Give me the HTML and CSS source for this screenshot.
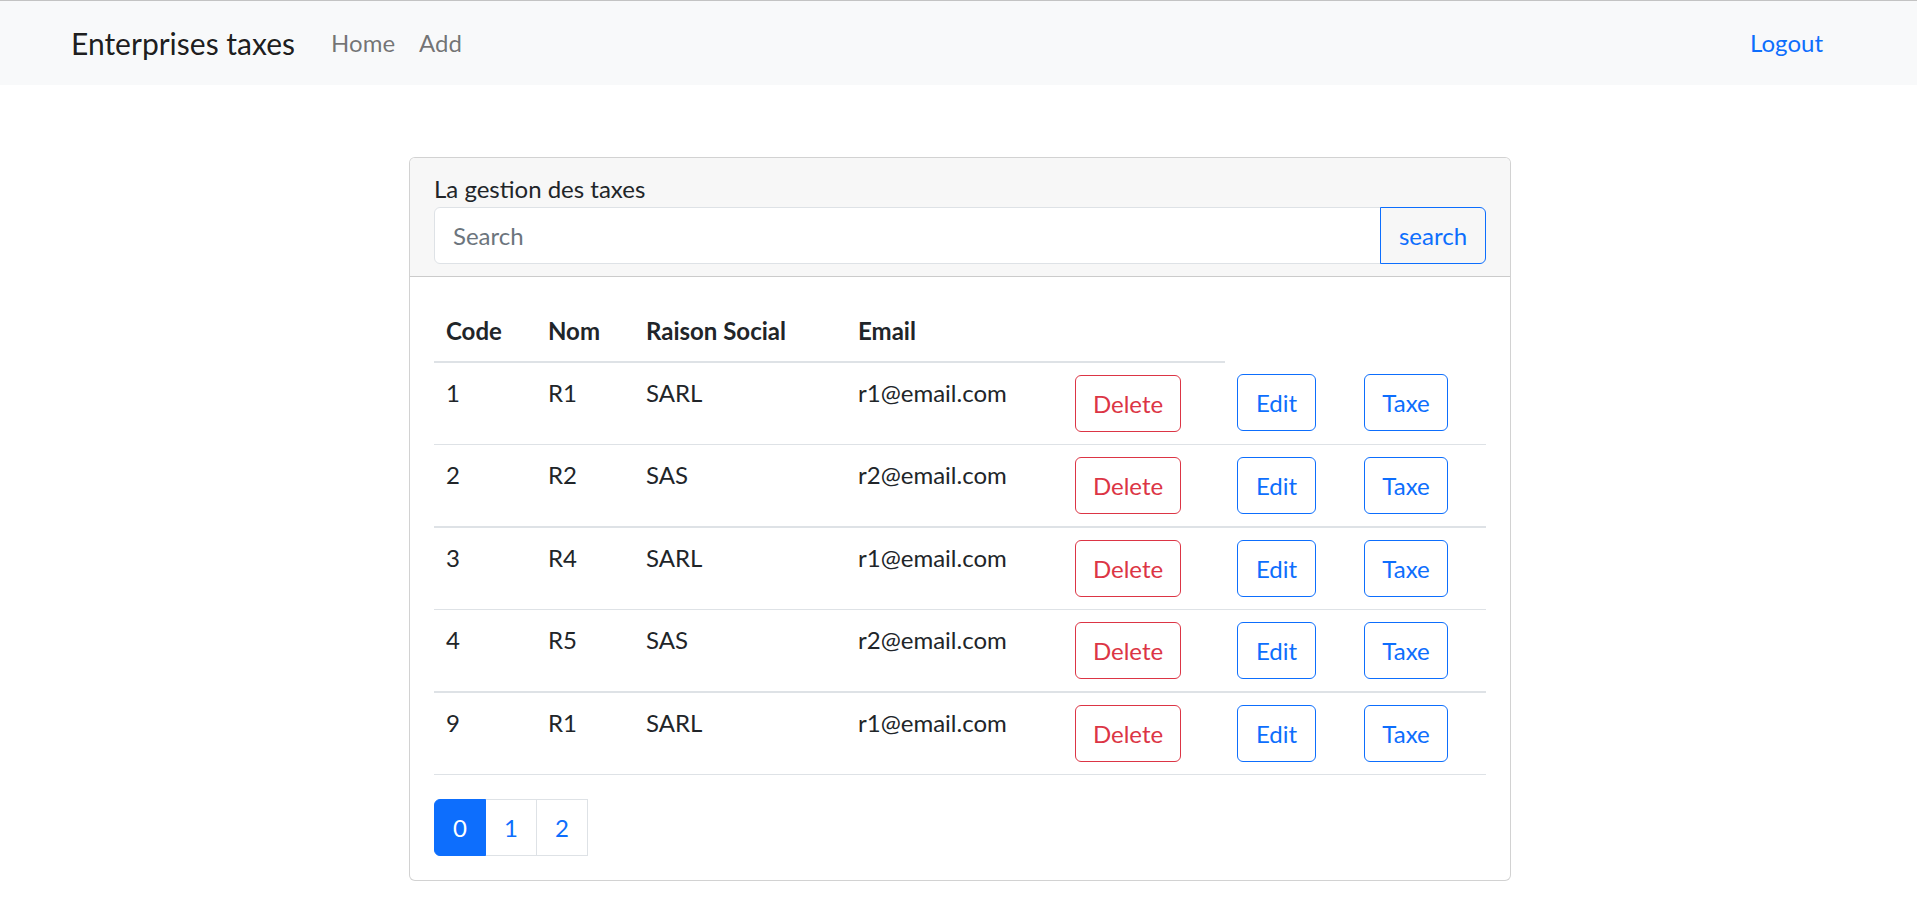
FILE: index.html
```html
<!DOCTYPE html>
<html lang="fr">
<head>
<meta charset="utf-8">
<title>Enterprises taxes</title>
<link rel="stylesheet" href="styles.css">
</head>
<body>
<nav class="navbar">
  <a class="brand" href="#">Enterprises taxes</a>
  <ul class="nav-links">
    <li><a class="nav-link" href="#">Home</a></li>
    <li><a class="nav-link" href="#">Add</a></li>
  </ul>
  <a class="nav-link logout" href="#">Logout</a>
</nav>
<main class="main">
  <section class="card">
    <header class="card-header">
      <div class="card-title">La gestion des taxes</div>
      <form class="input-group">
        <input class="search-input" type="text" placeholder="Search">
        <button class="btn btn-primary-outline search-btn" type="button">search</button>
      </form>
    </header>
    <div class="card-body">
      <table class="table">
        <colgroup>
          <col class="c-code"><col class="c-nom"><col class="c-raison"><col class="c-email"><col class="c-del"><col class="c-edit"><col class="c-taxe">
        </colgroup>
        <thead>
          <tr><th>Code</th><th>Nom</th><th>Raison Social</th><th>Email</th><th></th></tr>
        </thead>
        <tbody>
          <tr><td>1</td><td>R1</td><td>SARL</td><td>r1@email.com</td><td><button class="btn btn-danger-outline btn-delete">Delete</button></td><td><button class="btn btn-primary-outline btn-edit">Edit</button></td><td><button class="btn btn-primary-outline btn-taxe">Taxe</button></td></tr>
          <tr><td>2</td><td>R2</td><td>SAS</td><td>r2@email.com</td><td><button class="btn btn-danger-outline btn-delete">Delete</button></td><td><button class="btn btn-primary-outline btn-edit">Edit</button></td><td><button class="btn btn-primary-outline btn-taxe">Taxe</button></td></tr>
          <tr><td>3</td><td>R4</td><td>SARL</td><td>r1@email.com</td><td><button class="btn btn-danger-outline btn-delete">Delete</button></td><td><button class="btn btn-primary-outline btn-edit">Edit</button></td><td><button class="btn btn-primary-outline btn-taxe">Taxe</button></td></tr>
          <tr><td>4</td><td>R5</td><td>SAS</td><td>r2@email.com</td><td><button class="btn btn-danger-outline btn-delete">Delete</button></td><td><button class="btn btn-primary-outline btn-edit">Edit</button></td><td><button class="btn btn-primary-outline btn-taxe">Taxe</button></td></tr>
          <tr><td>9</td><td>R1</td><td>SARL</td><td>r1@email.com</td><td><button class="btn btn-danger-outline btn-delete">Delete</button></td><td><button class="btn btn-primary-outline btn-edit">Edit</button></td><td><button class="btn btn-primary-outline btn-taxe">Taxe</button></td></tr>
        </tbody>
      </table>
      <ul class="pagination">
        <li><a class="page-link active" href="#">0</a></li>
        <li><a class="page-link" href="#">1</a></li>
        <li><a class="page-link" href="#">2</a></li>
      </ul>
    </div>
  </section>
</main>
</body>
</html>
```

FILE: styles.css
```css
* { box-sizing: border-box; }
html, body { margin: 0; }
body {
  font-family: Lato, "Segoe UI", sans-serif;
  font-size: 24px;
  line-height: 36px;
  color: #212529;
  background: #fff;
  border-top: 1px solid #c3c3c3;
}
.navbar {
  display: flex;
  align-items: center;
  height: 84px;
  padding: 0 82px 0 71px;
  background: #f8f9fa;
}
.brand {
  font-size: 30px;
  line-height: 45px;
  color: rgba(0, 0, 0, .9);
  text-decoration: none;
  margin-right: 24px;
}
.nav-links { display: flex; list-style: none; margin: 0; padding: 0; }
.nav-link {
  display: block;
  padding: 12px;
  color: rgba(0, 0, 0, .55);
  text-decoration: none;
  font-size: 24px;
  line-height: 36px;
}
.logout { margin-left: auto; color: #0d6efd; }

.main { display: flex; justify-content: center; padding: 72px 0 0 3px; }
.card {
  width: 1102px;
  border: 1px solid rgba(0, 0, 0, .175);
  border-radius: 6px;
  overflow: hidden;
  background: #fff;
}
.card-header {
  padding: 12px 24px;
  background: #f7f7f7;
  border-bottom: 1px solid rgba(0, 0, 0, .175);
}
.card-title { line-height: 37px; }
.input-group { display: flex; margin: 0; }
.search-input {
  flex: 1;
  height: 57px;
  border: 1px solid #dee2e6;
  border-radius: 6px 0 0 6px;
  padding: 0 18px;
  font: inherit;
  color: #212529;
  background: #fff;
  outline: none;
}
.search-input::placeholder { color: #6c757d; opacity: 1; }
.btn {
  display: inline-block;
  height: 57px;
  padding: 0;
  border: 1px solid;
  border-radius: 6px;
  background: transparent;
  font: inherit;
  line-height: 55px;
  text-align: center;
  cursor: pointer;
}
.search-btn { width: 106px; margin-left: -1px; border-radius: 0 6px 6px 0; }
.btn-primary-outline { color: #0d6efd; border-color: #0d6efd; }
.btn-danger-outline { color: #dc3545; border-color: #dc3545; }
.btn-delete { width: 106px; }
.btn-edit { width: 79px; }
.btn-taxe { width: 84px; }

.card-body { padding: 24px; }
.table {
  width: 100%;
  border-collapse: collapse;
  table-layout: fixed;
  margin-bottom: 24px;
}
.c-code { width: 102px; }
.c-nom { width: 98px; }
.c-raison { width: 212px; }
.c-email { width: 217px; }
.c-del { width: 162px; }
.c-edit { width: 127px; }
.c-taxe { width: 134px; }
.table th, .table td {
  padding: 12px;
  text-align: left;
  vertical-align: top;
  border-bottom: 1px solid #dee2e6;
  line-height: 36px;
  white-space: nowrap;
}
.table th { font-weight: 700; border-bottom-width: 2px; }
.table tbody tr:nth-child(even) td { border-bottom-width: 2px; }

.pagination { display: flex; list-style: none; margin: 0; padding: 0; }
.page-link {
  display: block;
  width: 52px;
  height: 57px;
  border: 1px solid #dee2e6;
  line-height: 55px;
  text-align: center;
  color: #0d6efd;
  background: #fff;
  text-decoration: none;
}
.pagination li + li { margin-left: -1px; }
.pagination li:first-child .page-link { border-radius: 6px 0 0 6px; }
.page-link.active { background: #0d6efd; border-color: #0d6efd; color: #fff; position: relative; z-index: 1; }
```
